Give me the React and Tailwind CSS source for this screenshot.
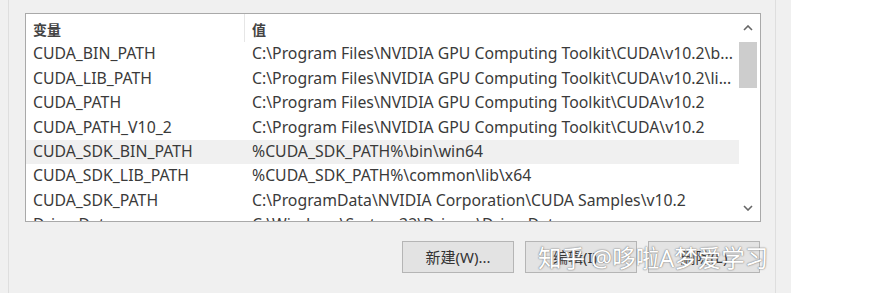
const rows = [
  ["CUDA_BIN_PATH", "C:\\Program Files\\NVIDIA GPU Computing Toolkit\\CUDA\\v10.2\\b..."],
  ["CUDA_LIB_PATH", "C:\\Program Files\\NVIDIA GPU Computing Toolkit\\CUDA\\v10.2\\li..."],
  ["CUDA_PATH", "C:\\Program Files\\NVIDIA GPU Computing Toolkit\\CUDA\\v10.2"],
  ["CUDA_PATH_V10_2", "C:\\Program Files\\NVIDIA GPU Computing Toolkit\\CUDA\\v10.2"],
  ["CUDA_SDK_BIN_PATH", "%CUDA_SDK_PATH%\\bin\\win64"],
  ["CUDA_SDK_LIB_PATH", "%CUDA_SDK_PATH%\\common\\lib\\x64"],
  ["CUDA_SDK_PATH", "C:\\ProgramData\\NVIDIA Corporation\\CUDA Samples\\v10.2"],
  ["DriverData", "C:\\Windows\\System32\\Drivers\\DriverData"],
];

const font = "font-['Noto_Sans','Noto_Sans_CJK_SC',sans-serif]";

const Row = ({ name, value, selected }) => (
  <div className={`flex h-[24.4px] shrink-0 items-center ${selected ? "bg-[#f0f0f0]" : ""}`}>
    <div className="w-[219px] shrink-0 pl-[7px] whitespace-nowrap">{name}</div>
    <div className="pl-[7px] whitespace-nowrap">{value}</div>
  </div>
);

const Button = ({ children }) => (
  <div className="flex h-[32px] w-[112px] items-center justify-center border border-[#b5b5b5] bg-[#e3e3e3] text-[15px] text-[#333]">
    {children}
  </div>
);

export default function App() {
  return (
    <div className={`flex h-[293px] w-[884px] overflow-hidden bg-white ${font}`}>
      <div className="h-full w-[791px] shrink-0 bg-[#f0f0f0] pl-[8px]">
        <div className="flex h-full w-[768px] flex-col border-x border-[#dedede] pl-[16px] pt-[13px]">
          <div className="flex h-[209px] w-[736px] border border-[#a9a9a9] bg-white">
            <div className="flex min-w-0 flex-1 flex-col overflow-hidden text-[15.8px] text-[#3a3a3a]">
              <div className="flex h-[28px] shrink-0 items-center">
                <div className="h-full w-[219px] shrink-0 border-r border-[#e6e6e6] pl-[7px] pt-[4px] text-[14px] font-bold leading-[24px] text-[#444]">
                  变量
                </div>
                <div className="pl-[7px] pt-[4px] text-[14px] font-bold leading-[24px] text-[#444]">值</div>
              </div>
              {rows.map((r, i) => (
                <Row key={r[0]} name={r[0]} value={r[1]} selected={i === 4} />
              ))}
            </div>
            <div className="flex w-[21px] shrink-0 flex-col items-start">
              <div className="flex h-[28px] w-[18px] items-center justify-center">
                <svg width="10" height="6" viewBox="0 0 10 6">
                  <path d="M1 5 L5 1 L9 5" fill="none" stroke="#666" strokeWidth="1.6" />
                </svg>
              </div>
              <div className="h-[46px] w-[18px] bg-[#cdcdcd]" />
              <div className="flex-1" />
              <div className="flex h-[26px] w-[18px] items-center justify-center">
                <svg width="10" height="6" viewBox="0 0 10 6">
                  <path d="M1 1 L5 5 L9 1" fill="none" stroke="#666" strokeWidth="1.6" />
                </svg>
              </div>
            </div>
          </div>
          <div className="relative mt-[19px] flex w-[736px] justify-end gap-[11px] pr-[1px]">
            <Button>新建(W)...</Button>
            <Button>编辑(I)...</Button>
            <Button>删除(L)</Button>
            <div className="absolute left-[513px] top-[3px] whitespace-nowrap text-[23.5px] leading-[28px] text-white [text-shadow:0_0_2px_#888,0_0_1px_#666]">
              知乎 @哆啦A梦爱学习
            </div>
          </div>
        </div>
      </div>
    </div>
  );
}
